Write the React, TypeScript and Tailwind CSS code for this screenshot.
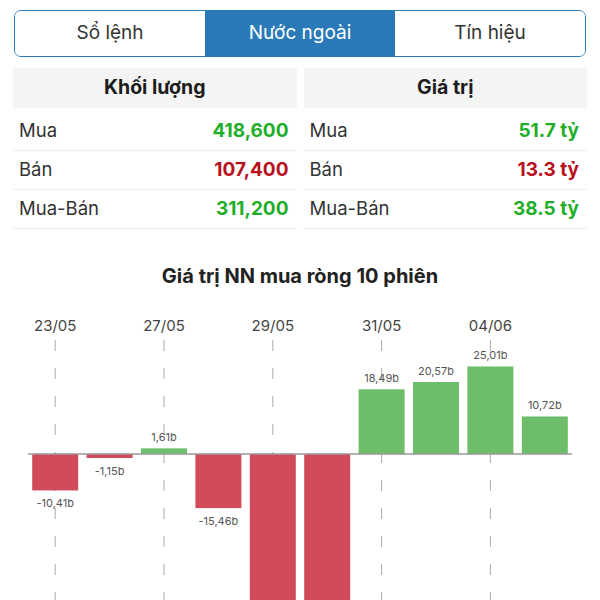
const tabs = ['Sổ lệnh', 'Nước ngoài', 'Tín hiệu'];

type Row = { label: string; value: string; color: string };

const volumeRows: Row[] = [
  { label: 'Mua', value: '418,600', color: 'text-[#1fae2a]' },
  { label: 'Bán', value: '107,400', color: 'text-[#b8111d]' },
  { label: 'Mua-Bán', value: '311,200', color: 'text-[#1fae2a]' },
];

const valueRows: Row[] = [
  { label: 'Mua', value: '51.7 tỷ', color: 'text-[#1fae2a]' },
  { label: 'Bán', value: '13.3 tỷ', color: 'text-[#b8111d]' },
  { label: 'Mua-Bán', value: '38.5 tỷ', color: 'text-[#1fae2a]' },
];

const bars = [
  { v: -10.41, label: '-10,41b', date: '23/05' },
  { v: -1.15, label: '-1,15b' },
  { v: 1.61, label: '1,61b', date: '27/05' },
  { v: -15.46, label: '-15,46b' },
  { v: -62, label: '', date: '29/05' },
  { v: -58, label: '' },
  { v: 18.49, label: '18,49b', date: '31/05' },
  { v: 20.57, label: '20,57b' },
  { v: 25.01, label: '25,01b', date: '04/06' },
  { v: 10.72, label: '10,72b' },
];

function Table({ title, rows }: { title: string; rows: Row[] }) {
  return (
    <div className="flex flex-col">
      <div className="h-[40px] bg-[#f4f4f4] flex items-center justify-center text-[19.5px] font-bold text-[#1c1c1c]">
        {title}
      </div>
      <div className="mt-[4px]">
        {rows.map((r) => (
          <div
            key={r.label}
            className="h-[39px] flex items-center justify-between pl-[6px] pr-[8px] border-b border-[#ededed] text-[18.5px]"
          >
            <span className="text-[#333]">{r.label}</span>
            <span className={`font-bold text-[19px] ${r.color}`}>{r.value}</span>
          </div>
        ))}
      </div>
    </div>
  );
}

function Chart() {
  const left = 28;
  const slot = 54.4;
  const zero = 153;
  const scale = 3.5;
  return (
    <svg width="600" height="300" className="block">
      {bars.map((b, i) =>
        b.date ? (
          <g key={'g' + i}>
            <text
              x={left + slot * (i + 0.5)}
              y={30}
              textAnchor="middle"
              fontSize="15"
              fill="#444"
            >
              {b.date}
            </text>
            <line
              x1={left + slot * (i + 0.5)}
              x2={left + slot * (i + 0.5)}
              y1={39}
              y2={300}
              stroke="#aaa"
              strokeWidth="1"
              strokeDasharray="11 17"
            />
          </g>
        ) : null
      )}
      {bars.map((b, i) => {
        const x = left + slot * i + 4.2;
        const h = Math.abs(b.v) * scale;
        const y = b.v >= 0 ? zero - h : zero;
        return (
          <rect
            key={'b' + i}
            x={x}
            y={y}
            width={46}
            height={h}
            fill={b.v >= 0 ? '#6dbd6a' : '#d24b5a'}
          />
        );
      })}
      <line x1={left} x2={572} y1={zero} y2={zero} stroke="#999" strokeWidth="1.5" />
      {bars.map((b, i) => {
        if (!b.label) return null;
        const h = Math.abs(b.v) * scale;
        const y = b.v >= 0 ? zero - h - 7 : zero + h + 17;
        return (
          <text
            key={'l' + i}
            x={left + slot * (i + 0.5)}
            y={y}
            textAnchor="middle"
            fontSize="11"
            fill="#555"
          >
            {b.label}
          </text>
        );
      })}
    </svg>
  );
}

export default function App() {
  return (
    <div
      className="w-[600px] h-[600px] overflow-hidden bg-white"
      style={{ fontFamily: 'Inter, "Noto Sans", sans-serif' }}
    >
      {/* Segmented control */}
      <div className="px-[14px] pt-[10px]">
        <div className="h-[47px] flex border border-[#2a7ab8] rounded-[7px] overflow-hidden">
          {tabs.map((t, i) => (
            <div
              key={t}
              className={`flex-1 flex items-center justify-center text-[19px] ${
                i === 1 ? 'bg-[#2a7ab8] text-white' : 'bg-white text-[#333]'
              }`}
            >
              {t}
            </div>
          ))}
        </div>
      </div>

      {/* Volume / value tables */}
      <div className="px-[13px] pt-[11px] grid grid-cols-2 gap-[7px]">
        <Table title="Khối lượng" rows={volumeRows} />
        <Table title="Giá trị" rows={valueRows} />
      </div>

      {/* Foreign net buy chart */}
      <div className="mt-[35px] h-[24px] flex items-center justify-center text-[20px] font-bold text-[#222]">
        Giá trị NN mua ròng 10 phiên
      </div>
      <div className="mt-[13px]">
        <Chart />
      </div>
    </div>
  );
}
